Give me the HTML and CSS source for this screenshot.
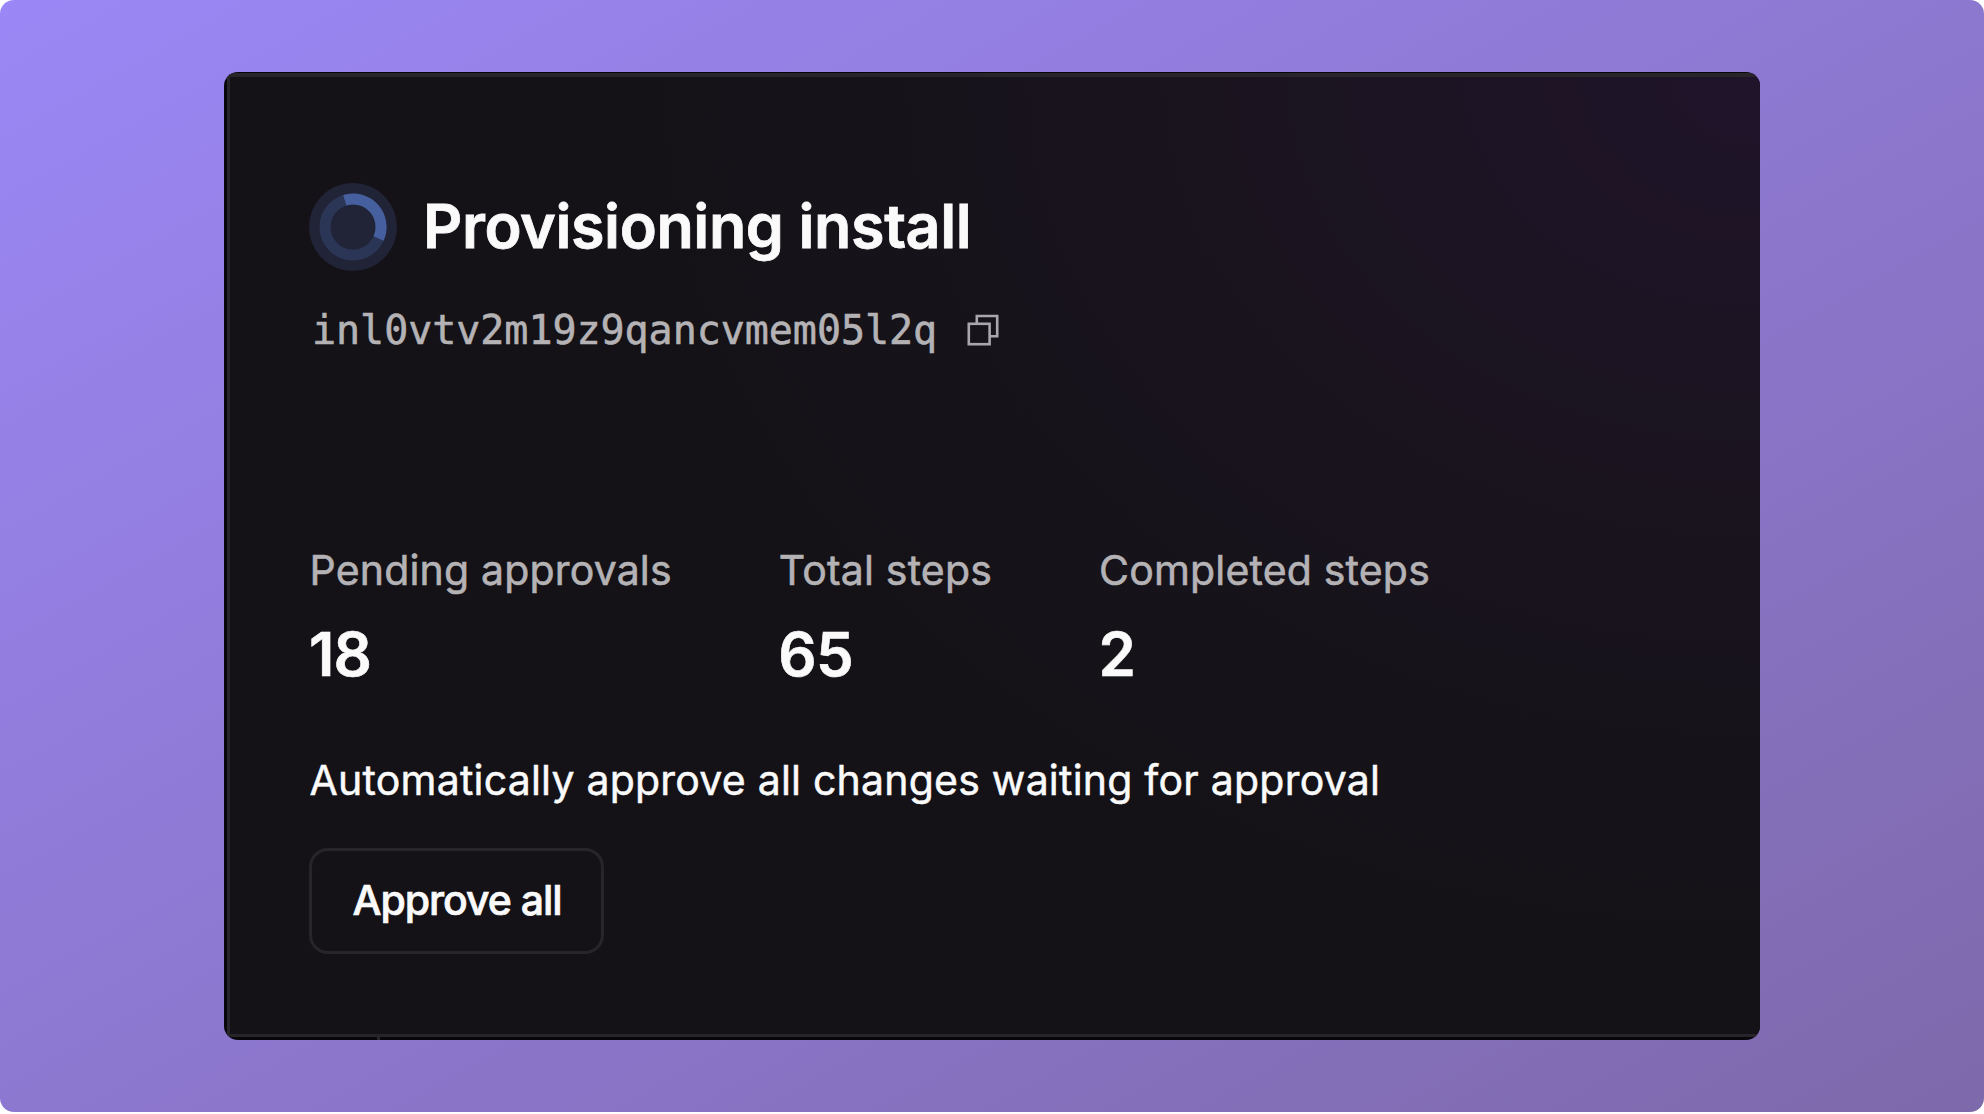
FILE: index.html
```html
<!DOCTYPE html>
<html lang="en">
<head>
  <meta charset="UTF-8">
  <meta name="viewport" content="width=device-width, initial-scale=1.0">
  <title>Provisioning install</title>
  <link rel="stylesheet" href="styles.css">
</head>
<body>

  <main class="stage">
    <div class="frame">
      <section class="card">

        <div class="title-row">
          <svg class="spinner" viewBox="0 0 88 88">
            <circle cx="44" cy="44" r="44" fill="#212437"/>
            <circle cx="44" cy="44" r="28" fill="none" stroke="#2b3656" stroke-width="11"/>
            <path d="M35.8 17.2A28 28 0 0 1 69.6 55.4" fill="none" stroke="#465f9e" stroke-width="11"/>
          </svg>
          <h1>Provisioning install</h1>
        </div>

        <div class="id-row">
          <span class="install-id">inl0vtv2m19z9qancvmem05l2q</span>
          <svg class="copy-icon" viewBox="0 0 32 32" fill="none" stroke="#aaa7ac" stroke-width="2.6">
            <path d="M9.8 9V2H30.2V22.3H23"/>
            <rect x="1.8" y="9.8" width="20.8" height="20.4"/>
          </svg>
        </div>

        <div class="stats">
          <div class="stat">
            <div class="label">Pending approvals</div>
            <div class="value">18</div>
          </div>
          <div class="stat">
            <div class="label">Total steps</div>
            <div class="value">65</div>
          </div>
          <div class="stat">
            <div class="label">Completed steps</div>
            <div class="value">2</div>
          </div>
        </div>

        <p class="note">Automatically approve all changes waiting for approval</p>
        <button class="approve-button">Approve all</button>

      </section>
      <span class="tick"></span>
    </div>
  </main>

</body>
</html>
```
FILE: styles.css
```css
* { box-sizing: border-box; margin: 0; padding: 0; }

body {
  font-family: Inter, "Liberation Sans", sans-serif;
  background-color: #fff;
  color: #fafafa;
  overflow: hidden;
}

.stage {
  height: 1112px;
  padding: 72px 224px;
  border-radius: 14px;
  background: linear-gradient(to bottom right, #9b87f5, #7e69ab);
}

.frame {
  position: relative;
  height: 968px;
  padding: 1px 0 3px 3px;
  border-radius: 14px;
  background-color: #08060b;
  overflow: hidden;
}

.card {
  height: 964px;
  padding: 106px 79px 0 79px;
  border: 3px solid #27252a;
  border-top-width: 4px;
  border-right: none;
  border-radius: 4px 0 0 4px;
  background: radial-gradient(ellipse 1100px 850px at 100% 0, #1f142a 0%, #1b1421 40%, #17131b 72%, #141217 100%);
}

.title-row {
  display: flex;
  align-items: flex-start;
  gap: 26px;
}

.spinner {
  width: 88px;
  height: 88px;
}

h1 {
  font-size: 61px;
  font-weight: 600;
  line-height: 86px;
  letter-spacing: -0.4px;
  -webkit-text-stroke: 0.8px;
}

.id-row {
  display: flex;
  align-items: center;
  gap: 30px;
  margin-top: 29px;
  padding-left: 3px;
}

.install-id {
  font-family: "DejaVu Sans Mono", monospace;
  font-size: 40px;
  line-height: 60px;
  letter-spacing: -0.04px;
  color: #b4b2b5;
  -webkit-text-stroke: 0.6px;
}

.copy-icon {
  width: 32px;
  height: 32px;
}

.stats {
  display: flex;
  gap: 106.5px;
  margin-top: 180px;
}

.label {
  padding-left: 0.5px;
  font-size: 41px;
  line-height: 60px;
  letter-spacing: 0.18px;
  color: #b4b2b5;
  -webkit-text-stroke: 0.6px;
}

.value {
  margin-top: 14px;
  font-size: 60px;
  font-weight: 600;
  line-height: 80px;
  letter-spacing: -0.8px;
  -webkit-text-stroke: 0.6px;
}

.note {
  margin-top: 56px;
  padding-left: 0.5px;
  font-size: 41px;
  line-height: 60px;
  letter-spacing: 0.22px;
  -webkit-text-stroke: 0.5px;
}

.approve-button {
  display: block;
  width: 295px;
  height: 106px;
  margin-top: 38px;
  padding: 0 0 3px 1px;
  border: 3px solid #27252a;
  border-radius: 19px;
  background: none;
  color: #fafafa;
  font-family: inherit;
  font-size: 41px;
  font-weight: 500;
  letter-spacing: -1.05px;
  -webkit-text-stroke: 0.7px;
}

.tick {
  position: absolute;
  left: 153px;
  bottom: 0;
  width: 3px;
  height: 3px;
  background-color: #27252a;
}
```
